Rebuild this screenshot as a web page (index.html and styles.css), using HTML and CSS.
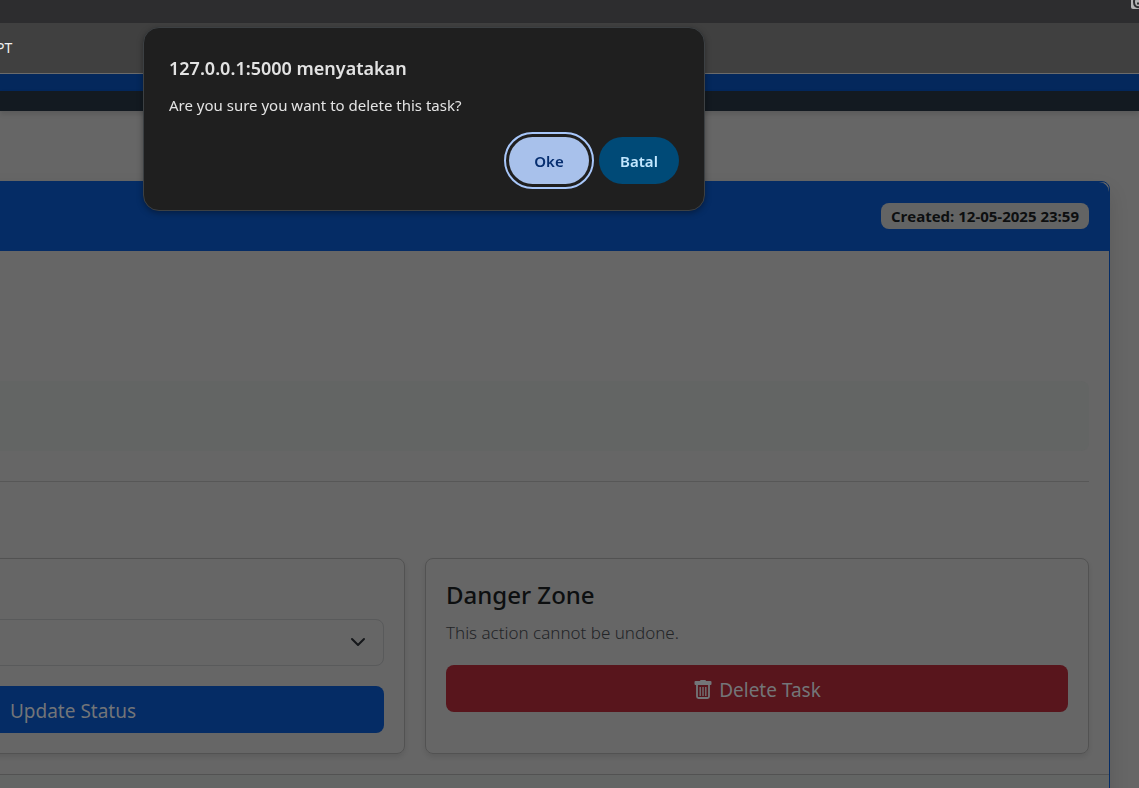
FILE: index.html
```html
<!DOCTYPE html>
<html lang="en">
<head>
<meta charset="utf-8">
<title>Task Details</title>
<link rel="stylesheet" href="styles.css">
</head>
<body>
<div class="tab-strip">
  <svg class="tab-icon" viewBox="0 0 16 16" aria-hidden="true"><rect width="16" height="16" rx="2" fill="#b4b4b4"/><path d="M9 5Q3 3 3 9t6 5M6 10.500h6" fill="none" stroke="#2d2d2f" stroke-width="2"/></svg>
</div>
<div class="bookmarks"><a class="bookmark" href="#">PT</a></div>
<header class="navbar"></header>
<div class="subnav"></div>
<main class="page">
  <article class="card task">
    <div class="task-header"><span class="badge">Created: 12-05-2025 23:59</span></div>
    <div class="task-body">
      <div class="description"></div>
      <hr class="divider">
      <div class="actions">
        <section class="card panel">
          <form class="status-form">
            <div class="select-wrap">
              <select class="select" aria-label="Status"><option></option></select>
              <svg class="chevron" viewBox="0 0 16 16" aria-hidden="true"><path d="m2 5 6 6 6-6" fill="none" stroke="#15171a" stroke-width="2" stroke-linecap="round" stroke-linejoin="round"/></svg>
            </div>
            <button class="btn btn-primary" type="button">Update Status</button>
          </form>
        </section>
        <section class="card panel">
          <h5 class="panel-title">Danger Zone</h5>
          <p class="panel-text">This action cannot be undone.</p>
          <button class="btn btn-danger" type="button">
            <svg class="trash" viewBox="0 0 20 20" aria-hidden="true"><path d="M7 1Q7 0 8 0h4q1 0 1 1h4.500q1 0 1 1v2q0 1-1 1h-15q-1 0-1-1V2q0-1 1-1z" fill="currentColor"/><path d="M4 4v12.500A1.500 1.500 0 0 0 5.500 18h9a1.500 1.500 0 0 0 1.500-1.500V4" fill="none" stroke="currentColor" stroke-width="1.800"/><path d="M7.200 7v9M10 7v9M12.800 7v9" fill="none" stroke="currentColor" stroke-width="1.300"/></svg>
            Delete Task
          </button>
        </section>
      </div>
    </div>
    <footer class="task-footer"></footer>
  </article>
</main>
<dialog class="dialog" open aria-labelledby="dialog-title">
  <h1 class="dialog-title" id="dialog-title">127.0.0.1:5000 menyatakan</h1>
  <p class="dialog-text">Are you sure you want to delete this task?</p>
  <div class="dialog-buttons">
    <button class="pill pill-ok" type="button">Oke</button>
    <button class="pill pill-cancel" type="button">Batal</button>
  </div>
</dialog>
</body>
</html>
```
FILE: styles.css
```css
* { box-sizing: border-box; }

body {
  margin: 0;
  height: 100vh;
  overflow: hidden;
  background: #666;
  color: #0d0f10;
  font-family: "Noto Sans", "Open Sans", sans-serif;
  font-size: 19px;
  line-height: 30px;
}

button, select { font: inherit; }

.tab-strip {
  display: flex;
  justify-content: flex-end;
  height: 23px;
  background: #2d2d2f;
  overflow: hidden;
}
.tab-icon {
  flex: none;
  width: 16px;
  height: 16px;
  margin-top: -7px;
  margin-right: -8px;
}

.bookmarks {
  display: flex;
  align-items: center;
  height: 51px;
  background: #404040;
  border-bottom: 1px solid #6b6b6b;
}
.bookmark {
  margin-left: -4px;
  color: #f0f0f0;
  font-size: 14px;
  text-decoration: none;
}

.navbar { height: 17px; background: #04285c; }
.subnav {
  height: 20px;
  background: #131a21;
  box-shadow: 0 3px 5px rgba(0, 0, 0, .12);
}

.page { padding: 70px 29px 0 0; }

.card { border: 1px solid #525252; border-radius: 8px; }

.task {
  margin-left: -280px;
  border-color: #052c65;
  box-shadow: 0 10px 20px rgba(0, 0, 0, .12);
}
.task-header {
  display: flex;
  justify-content: flex-end;
  align-items: center;
  height: 69px;
  padding: 0 20px 2px;
  background: #052c65;
  border-radius: 10px 10px 0 0;
}
.badge {
  padding: 3px 10px;
  border-radius: 8px;
  background: #636464;
  color: #0d0f10;
  font-family: "Open Sans", "Noto Sans", sans-serif;
  font-size: 15px;
  font-weight: 700;
  line-height: 20px;
}

.task-body { padding: 130px 20px 20px; }
.description { height: 70px; border-radius: 8px; background: #636564; }
.divider { margin: 30px 0 76px; border: 0; border-top: 1px solid #575757; }

.actions { display: grid; grid-template-columns: 1fr 1fr; gap: 20px; }
.panel { padding: 20px; box-shadow: 0 3px 5px rgba(0, 0, 0, .09); }

.status-form { display: grid; gap: 20px; padding-top: 40px; }
.select-wrap { position: relative; }
.select {
  display: block;
  width: 100%;
  height: 47px;
  border: 1px solid #595a5b;
  border-radius: 8px;
  background: #666;
  appearance: none;
}
.chevron {
  position: absolute;
  top: 15px;
  right: 18px;
  width: 16px;
  height: 16px;
}

.panel-title { margin: 0 0 8px; font-size: 24px; font-weight: 500; line-height: 32px; }
.panel-text { margin: 0 0 18px; color: #222427; font-size: 17px; font-weight: 300; line-height: 28px; }

.btn {
  display: flex;
  justify-content: center;
  align-items: center;
  gap: 6px;
  width: 100%;
  height: 47px;
  padding: 2px 12px 0;
  border: 0;
  border-radius: 8px;
  color: #737578;
}
.btn-primary { background: #052c65; }
.btn-danger { background: #58151c; }
.trash { width: 20px; height: 20px; }

.task-footer {
  height: 80px;
  border-top: 1px solid #525252;
  background: #636564;
}

.dialog {
  position: fixed;
  top: 27px;
  left: 143px;
  width: 562px;
  margin: 0;
  padding: 24px 25px 26px;
  border: 1px solid #3c4043;
  border-radius: 16px;
  background: #1f1f1f;
  color: #e3e3e3;
  box-shadow: 0 2px 6px rgba(0, 0, 0, .35);
}
.dialog-title { margin: 0 0 9px; font-size: 18px; font-weight: 600; line-height: 32px; }
.dialog-text { margin: 0 0 20px; font-size: 15px; line-height: 24px; }
.dialog-buttons { display: flex; justify-content: flex-end; gap: 10px; }
.pill {
  width: 80px;
  height: 47px;
  padding: 0;
  border: 0;
  border-radius: 24px;
  font-size: 15px;
  font-weight: 600;
}
.pill-ok {
  background: #a8c1eb;
  color: #062e6f;
  outline: 2px solid #a8c7fa;
  outline-offset: 3px;
}
.pill-cancel { background: #004a77; color: #c2e7ff; }
```
